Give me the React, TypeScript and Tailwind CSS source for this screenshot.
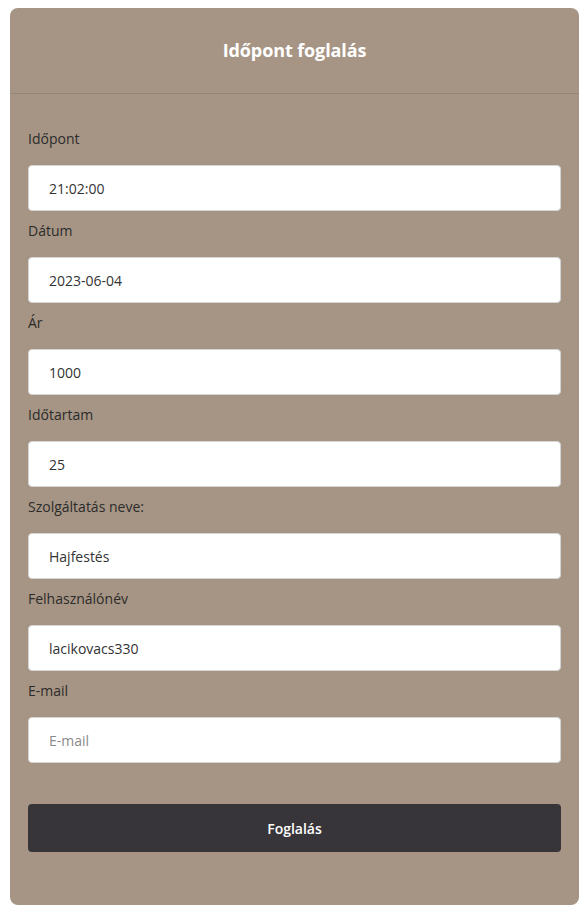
import React from "react";

const fields = [
  { label: "Időpont", value: "21:02:00" },
  { label: "Dátum", value: "2023-06-04" },
  { label: "Ár", value: "1000" },
  { label: "Időtartam", value: "25" },
  { label: "Szolgáltatás neve:", value: "Hajfestés" },
  { label: "Felhasználónév", value: "lacikovacs330" },
  { label: "E-mail", value: "", placeholder: "E-mail" },
];

const App = () => {
  return (
    <div className="min-h-[912px] bg-white pt-[8px] pl-[10px] font-['Open_Sans',sans-serif]">
      <div className="w-[569px] h-[897px] bg-[#a69584] rounded-[8px]">
        <div className="h-[86px] flex items-center justify-center border-b border-[#968676]">
          <h2 className="text-white text-[18px] font-bold tracking-[-0.1px]">Időpont foglalás</h2>
        </div>
        <form className="px-[18px] pt-[34px]">
          {fields.map((f, i) => (
            <div key={i} className={i === 0 ? "" : "mt-[9px]"}>
              <label className="block h-[22px] leading-[22px] text-[14px] text-[#2b2b2b] mb-[15px]">{f.label}</label>
              <input
                type="text"
                readOnly
                value={f.value}
                placeholder={f.placeholder}
                className="w-full h-[46px] px-[20px] text-[14px] text-[#333] placeholder-[#8a8a8a] bg-white border border-[#d4d4d4] rounded-[4px] outline-none"
              />
            </div>
          ))}
          <button
            type="button"
            className="mt-[41px] w-full h-[48px] bg-[#37353a] text-white text-[14px] font-semibold rounded-[4px]"
          >
            Foglalás
          </button>
        </form>
      </div>
    </div>
  );
};

export default App;
